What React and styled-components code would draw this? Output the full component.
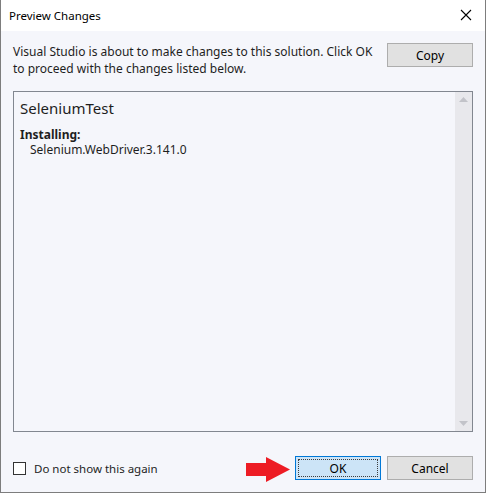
import React from "react";
import styled, { createGlobalStyle } from "styled-components";

const Global = createGlobalStyle`
  html, body { margin: 0; padding: 0; background: #ffffff; }
  body { font-family: "Noto Sans", "Open Sans", sans-serif; }
  * { box-sizing: border-box; }
`;

const Window = styled.div`
  width: 486px;
  height: 493px;
  display: flex;
  flex-direction: column;
  border: 1px solid #7d7d7d;
  border-top: none;
  background: #f5f6fb;
  color: #1e1e1e;
  font-size: 12px;
`;

const TitleBar = styled.div`
  height: 31px;
  flex: none;
  background: #ffffff;
  display: flex;
  align-items: center;
  justify-content: space-between;
  padding: 0 9px 1px 8px;
`;

const Title = styled.span`
  font-size: 11.5px;
  color: #000;
`;

const CloseBtn = styled.div`
  width: 12px;
  height: 12px;
  margin-right: 4px;
  display: flex;
`;

const Content = styled.div`
  flex: 1;
  display: flex;
  flex-direction: column;
  padding: 12px 12px 12px 12px;
`;

const Header = styled.div`
  display: flex;
  justify-content: space-between;
  align-items: flex-start;
  height: 48px;
`;

const Desc = styled.div`
  margin-top: 1px;
  display: flex;
  flex-direction: column;
`;

const DescLine = styled.span`
  display: block;
  height: 16.5px;
  line-height: 16.5px;
  font-size: 12px;
`;

const Button = styled.button`
  width: 86px;
  height: 24px;
  font-family: inherit;
  font-size: 12px;
  color: #000;
  background: ${p => (p.$primary ? "#cce4f7" : "#e1e1e1")};
  border: 1px solid ${p => (p.$primary ? "#0078d7" : "#adadad")};
  padding: 2px;
  margin: 0;
  display: flex;
  align-items: stretch;
  justify-content: stretch;
`;

const ButtonInner = styled.span`
  flex: 1;
  display: flex;
  align-items: center;
  justify-content: center;
  border: 1px dotted ${p => (p.$focus ? "#3d3d3d" : "transparent")};
`;

const ListBox = styled.div`
  height: 341px;
  border: 1px solid #828790;
  display: flex;
  background: #f5f6fb;
`;

const ListContent = styled.div`
  flex: 1;
  padding: 6px 6px;
`;

const Project = styled.div`
  font-size: 15px;
  line-height: 20px;
  margin-bottom: 9px;
`;

const Label = styled.div`
  font-weight: bold;
  font-size: 12px;
  line-height: 15px;
`;

const Item = styled.div`
  padding-left: 10px;
  font-size: 12px;
  line-height: 15px;
`;

const ScrollBar = styled.div`
  width: 17px;
  background: #e8e8ec;
  display: flex;
  flex-direction: column;
  justify-content: space-between;
  align-items: center;
  padding: 5px 0;
`;

const Footer = styled.div`
  margin-top: 24px;
  display: flex;
  align-items: center;
  height: 24px;
`;

const CheckRow = styled.label`
  display: flex;
  align-items: center;
  gap: 8px;
  flex: 1;
  font-size: 11.5px;
`;

const Box = styled.span`
  width: 13px;
  height: 13px;
  border: 1px solid #333;
  background: #fff;
  margin-top: 1px;
`;

const ButtonGroup = styled.div`
  display: flex;
  align-items: center;
  gap: 6px;
`;

const Arrow = styled.svg`
  width: 44px;
  height: 25px;
  margin-right: -1px;
  margin-top: 2px;
`;

export default function App() {
  return (
    <>
      <Global />
      <Window>
        <TitleBar>
          <Title>Preview Changes</Title>
          <CloseBtn>
            <svg width="12" height="12" viewBox="0 0 12 12">
              <path d="M1 1 L11 11 M11 1 L1 11" stroke="#000" strokeWidth="1.1" fill="none" />
            </svg>
          </CloseBtn>
        </TitleBar>
        <Content>
          <Header>
            <Desc>
              <DescLine>Visual Studio is about to make changes to this solution. Click OK</DescLine>
              <DescLine>to proceed with the changes listed below.</DescLine>
            </Desc>
            <Button>
              <ButtonInner>Copy</ButtonInner>
            </Button>
          </Header>
          <ListBox>
            <ListContent>
              <Project>SeleniumTest</Project>
              <Label>Installing:</Label>
              <Item>Selenium.WebDriver.3.141.0</Item>
            </ListContent>
            <ScrollBar>
              <svg width="9" height="5" viewBox="0 0 9 5">
                <path d="M0 5 L4.5 0 L9 5 Z" fill="#c2c3c9" />
              </svg>
              <svg width="9" height="5" viewBox="0 0 9 5">
                <path d="M0 0 L4.5 5 L9 0 Z" fill="#c2c3c9" />
              </svg>
            </ScrollBar>
          </ListBox>
          <Footer>
            <CheckRow>
              <Box />
              <span>Do not show this again</span>
            </CheckRow>
            <ButtonGroup>
              <Arrow viewBox="0 0 44 25">
                <path d="M0 6 L20 6 L20 0 L44 12.5 L20 25 L20 19 L0 19 Z" fill="#ed1c24" />
              </Arrow>
              <Button $primary>
                <ButtonInner $focus>OK</ButtonInner>
              </Button>
              <Button>
                <ButtonInner>Cancel</ButtonInner>
              </Button>
            </ButtonGroup>
          </Footer>
        </Content>
      </Window>
    </>
  );
}
